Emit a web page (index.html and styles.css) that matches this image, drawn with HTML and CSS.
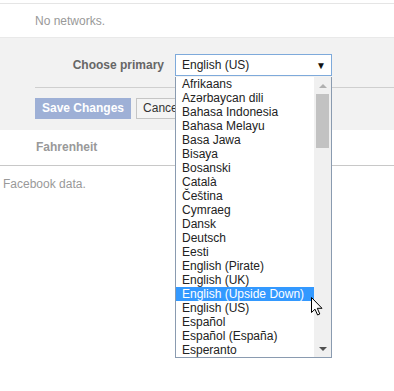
FILE: index.html
```html
<!DOCTYPE html>
<html>
<head>
<meta charset="utf-8">
<link rel="stylesheet" href="styles.css">
</head>
<body>
<div class="page">
  <div class="top-rule"></div>
  <div class="networks">No networks.</div>
  <div class="prefs">
    <div class="pref-row">
      <div class="pref-label">Choose primary</div>
      <div class="select">
        <span class="select-value">English (US)</span>
        <span class="select-arrow">&#9660;</span>
      </div>
    </div>
    <div class="divider"></div>
    <div class="actions">
      <button class="btn btn-save">Save Changes</button>
      <button class="btn btn-cancel">Cancel</button>
    </div>
  </div>
  <div class="units">Fahrenheit</div>
  <div class="footer-text">Facebook data.</div>

  <div class="listbox">
    <ul class="options">
      <li>Afrikaans</li>
      <li>Azərbaycan dili</li>
      <li>Bahasa Indonesia</li>
      <li>Bahasa Melayu</li>
      <li>Basa Jawa</li>
      <li>Bisaya</li>
      <li>Bosanski</li>
      <li>Català</li>
      <li>Čeština</li>
      <li>Cymraeg</li>
      <li>Dansk</li>
      <li>Deutsch</li>
      <li>Eesti</li>
      <li>English (Pirate)</li>
      <li>English (UK)</li>
      <li class="selected">English (Upside Down)</li>
      <li>English (US)</li>
      <li>Español</li>
      <li>Español (España)</li>
      <li>Esperanto</li>
    </ul>
    <div class="scrollbar">
      <div class="sb-arrow sb-up"></div>
      <div class="sb-thumb"></div>
      <div class="sb-space"></div>
      <div class="sb-arrow sb-down"></div>
    </div>
  </div>

  <svg class="cursor" width="12" height="19" viewBox="0 0 12 19">
    <path d="M0.5 0.5 L0.5 15.5 L4 12.2 L6.6 18 L8.8 17 L6.3 11.3 L11 11.3 Z" fill="#fff" stroke="#000" stroke-width="1" stroke-linejoin="round"/>
  </svg>
</div>
</body>
</html>
```

FILE: styles.css
```css
html, body {
  margin: 0;
  padding: 0;
  background: #fff;
}

.page {
  position: relative;
  width: 394px;
  height: 391px;
  overflow: hidden;
  font-family: "Liberation Sans", Arial, sans-serif;
  font-size: 12px;
  color: #333;
}

.top-rule {
  margin-top: 3px;
  border-top: 1px solid #e5e5e5;
}

.networks {
  height: 33px;
  line-height: 34px;
  padding-left: 35px;
  color: #999;
}

.prefs {
  background: #f2f2f2;
  border-top: 1px solid #e9e9e9;
  padding: 16px 0 11px 0;
}

.pref-row {
  display: flex;
  align-items: center;
  padding-left: 35px;
}

.pref-label {
  width: 129px;
  margin-right: 11px;
  text-align: right;
  font-weight: bold;
  color: #666;
}

.select {
  box-sizing: border-box;
  width: 157px;
  height: 22px;
  display: flex;
  align-items: center;
  justify-content: space-between;
  padding: 0 5px 0 6px;
  background: #fff;
  border: 1px solid #7eaadb;
  color: #222;
}

.select-arrow {
  font-size: 10px;
  color: #111;
}

.divider {
  margin: 11px 0 0 35px;
  border-top: 1px solid #cfcfcf;
}

.actions {
  display: flex;
  gap: 5px;
  padding: 10px 0 0 35px;
}

.btn {
  box-sizing: border-box;
  height: 21px;
  margin: 0;
  font-family: "Liberation Sans", Arial, sans-serif;
  font-size: 12px;
  line-height: 19px;
  padding: 0 6px;
  white-space: nowrap;
}

.btn-save {
  background: #9eb0d6;
  border: 1px solid #9eb0d6;
  color: #fff;
  font-weight: bold;
}

.btn-cancel {
  background: #f4f4f4;
  border: 1px solid #c5c5c5;
  color: #333;
}

.units {
  height: 35px;
  line-height: 35px;
  padding-left: 36px;
  font-weight: bold;
  color: #999;
  border-bottom: 1px solid #c8c8c8;
}

.footer-text {
  padding: 11px 0 0 3px;
  line-height: 14px;
  color: #999;
}

.listbox {
  position: absolute;
  left: 175px;
  top: 77px;
  box-sizing: border-box;
  width: 157px;
  height: 281px;
  display: flex;
  background: #fff;
  border: 1px solid #8a9bb0;
  border-top: none;
}

.options {
  flex: 1;
  list-style: none;
  margin: 0;
  padding: 0;
  color: #222;
}

.options li {
  height: 14px;
  line-height: 14px;
  padding-left: 6px;
  white-space: nowrap;
}

.options li.selected {
  background: #3399ff;
  color: #fff;
}

.scrollbar {
  width: 17px;
  display: flex;
  flex-direction: column;
  align-items: center;
  background: #f0f0f0;
}

.sb-arrow {
  height: 17px;
  width: 17px;
  position: relative;
}

.sb-up::after,
.sb-down::after {
  content: "";
  position: absolute;
  left: 5px;
  border-left: 4px solid transparent;
  border-right: 4px solid transparent;
}

.sb-up::after {
  top: 7px;
  border-bottom: 4px solid #b0b0b0;
}

.sb-down::after {
  top: 7px;
  border-top: 4px solid #505050;
}

.sb-thumb {
  width: 13px;
  height: 54px;
  background: #c2c2c2;
}

.sb-space {
  flex: 1;
}

.cursor {
  position: absolute;
  left: 311px;
  top: 297px;
}
```
